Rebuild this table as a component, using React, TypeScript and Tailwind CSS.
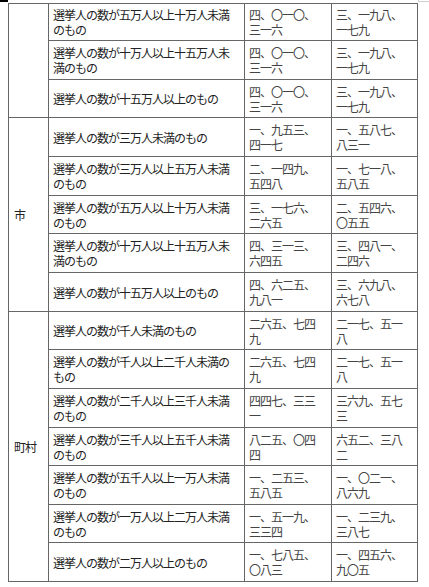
type Row = { desc: string[]; a: string[]; b: string[] };

const groups: { label: string; span: string; rows: Row[] }[] = [
  {
    label: '',
    span: 'row-span-3',
    rows: [
      { desc: ['選挙人の数が五万人以上十万人未満', 'のもの'], a: ['四、〇一〇、', '三一六'], b: ['三、一九八、', '一七九'] },
      { desc: ['選挙人の数が十万人以上十五万人未', '満のもの'], a: ['四、〇一〇、', '三一六'], b: ['三、一九八、', '一七九'] },
      { desc: ['選挙人の数が十五万人以上のもの'], a: ['四、〇一〇、', '三一六'], b: ['三、一九八、', '一七九'] },
    ],
  },
  {
    label: '市',
    span: 'row-span-5',
    rows: [
      { desc: ['選挙人の数が三万人未満のもの'], a: ['一、九五三、', '四一七'], b: ['一、五八七、', '八三一'] },
      { desc: ['選挙人の数が三万人以上五万人未満', 'のもの'], a: ['二、一四九、', '五四八'], b: ['一、七一八、', '五八五'] },
      { desc: ['選挙人の数が五万人以上十万人未満', 'のもの'], a: ['三、一七六、', '二六五'], b: ['二、五四六、', '〇五五'] },
      { desc: ['選挙人の数が十万人以上十五万人未', '満のもの'], a: ['四、三一三、', '六四五'], b: ['三、四八一、', '二四六'] },
      { desc: ['選挙人の数が十五万人以上のもの'], a: ['四、六二五、', '九八一'], b: ['三、六九八、', '六七八'] },
    ],
  },
  {
    label: '町村',
    span: 'row-span-7',
    rows: [
      { desc: ['選挙人の数が千人未満のもの'], a: ['二六五、七四', '九'], b: ['二一七、五一', '八'] },
      { desc: ['選挙人の数が千人以上二千人未満の', 'もの'], a: ['二六五、七四', '九'], b: ['二一七、五一', '八'] },
      { desc: ['選挙人の数が二千人以上三千人未満', 'のもの'], a: ['四四七、三三', '一'], b: ['三六九、五七', '三'] },
      { desc: ['選挙人の数が三千人以上五千人未満', 'のもの'], a: ['八二五、〇四', '四'], b: ['六五二、三八', '二'] },
      { desc: ['選挙人の数が五千人以上一万人未満', 'のもの'], a: ['一、二五三、', '五八五'], b: ['一、〇二一、', '八六九'] },
      { desc: ['選挙人の数が一万人以上二万人未満', 'のもの'], a: ['一、五一九、', '三三四'], b: ['一、二三九、', '三八七'] },
      { desc: ['選挙人の数が二万人以上のもの'], a: ['一、七八五、', '〇八三'], b: ['一、四五六、', '九〇五'] },
    ],
  },
];

const Lines = ({ lines }: { lines: string[] }) => (
  <div>
    {lines.map((l, i) => (
      <div key={i} className="whitespace-nowrap">{l}</div>
    ))}
  </div>
);

const App = () => {
  return (
    <div className="w-[429px] h-[587px] overflow-hidden bg-white font-['Noto_Sans_CJK_JP','Liberation_Sans',sans-serif] text-[12px] leading-[15px] tracking-[-1px] text-[#222]">
      <div className="h-[3px] flex justify-between">
        <div className="w-[8px] h-[2px] bg-black" />
        <div className="w-[11px] h-[2px] border-l border-b border-[#cfcfcf]" />
      </div>

      <div className="ml-[8px] w-fit grid grid-cols-[39px_195px_86px_85px] grid-rows-[36px_38px_37px_38px_38px_37px_38px_38px_37px_38px_38px_37px_38px_37px_38px] gap-px p-px bg-[#666]">
        {groups.map((g) => (
          <>
            <div key={g.label + 'label'} className={`${g.span} bg-white flex items-center pl-[5px]`}>
              {g.label}
            </div>
            {g.rows.map((r, i) => (
              <>
                <div key={g.label + i + 'd'} className="bg-white flex items-center pl-[4px] overflow-hidden">
                  <Lines lines={r.desc} />
                </div>
                <div key={g.label + i + 'a'} className="bg-white flex items-center pl-[4px] text-[#444]">
                  <Lines lines={r.a} />
                </div>
                <div key={g.label + i + 'b'} className="bg-white flex items-center pl-[4px] text-[#444]">
                  <Lines lines={r.b} />
                </div>
              </>
            ))}
          </>
        ))}
      </div>
    </div>
  );
};

export default App;
